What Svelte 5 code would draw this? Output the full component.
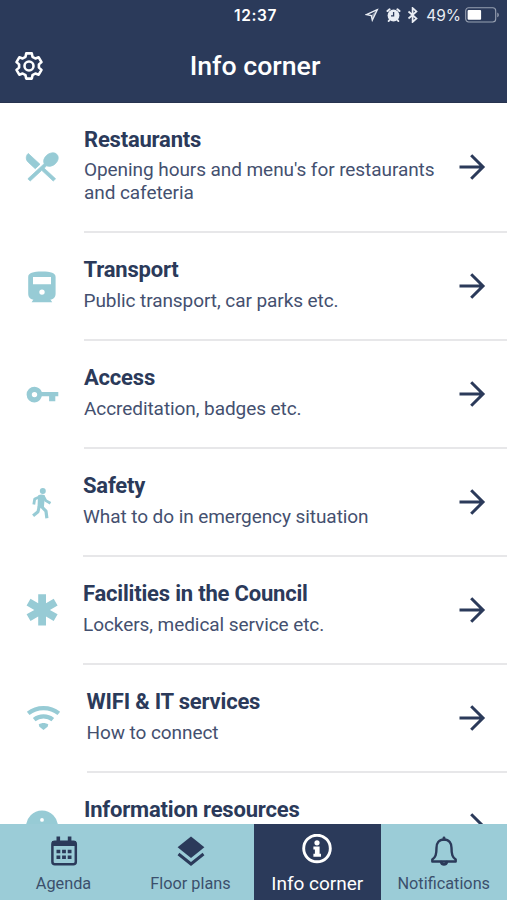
<script lang="ts">
    type Item = {
        icon: string;
        title: string;
        text?: string;
        shift: number;
    };

    const items: Item[] = [
        { icon: "food", title: "Restaurants", text: "Opening hours and menu's for restaurants and cafeteria", shift: 84 },
        { icon: "train", title: "Transport", text: "Public transport, car parks etc.", shift: 83.5 },
        { icon: "key", title: "Access", text: "Accreditation, badges etc.", shift: 84 },
        { icon: "walk", title: "Safety", text: "What to do in emergency situation", shift: 83 },
        { icon: "medical", title: "Facilities in the Council", text: "Lockers, medical service etc.", shift: 83 },
        { icon: "wifi", title: "WIFI & IT services", text: "How to connect", shift: 86.5 },
        { icon: "info", title: "Information resources", shift: 84 },
    ];

    const tabs = ["Agenda", "Floor plans", "Info corner", "Notifications"];

    let active = $state("Info corner");
</script>

<div class="screen">
    <header>
        <div class="status">
            <span></span>
            <span class="time">12:37</span>
            <div class="indicators">
                <svg class="location" width="14" height="14" viewBox="0 0 14 14">
                    <path d="M12.3 1.7 1.4 6.6l4.9.9 1 4.7z" fill="none" stroke="currentColor" stroke-width="1.3" />
                    <path d="M12.3 1.7 6.3 7.5l1 4.7z" fill="currentColor" fill-opacity=".5" />
                </svg>
                <svg class="alarm" width="15" height="14" viewBox="0 0 15 14">
                    <circle cx="7.5" cy="7.5" r="5.9" fill="currentColor" />
                    <path d="M1.5 3 3.6 1.3M13.5 3 11.4 1.3M3.500 12l-.8 1M11.500 12l.8 1" stroke="currentColor" stroke-width="2" stroke-linecap="round" />
                    <path d="M7.600 4v3.900H5" fill="none" stroke="#2b3a5a" stroke-width="1.3" />
                </svg>
                <svg class="bluetooth" width="11" height="16" viewBox="0 0 11 16">
                    <path d="m1.500 4.500 8 7L5.600 15V1l3.900 3.500-8 7" fill="none" stroke="currentColor" stroke-width="1.7" />
                </svg>
                <span class="percent">49%</span>
                <svg class="battery" width="35" height="16" viewBox="0 0 35 16">
                    <rect x=".7" y=".8" width="30" height="14.2" rx="3" fill="none" stroke="#98a1b2" stroke-width="1.1" />
                    <rect x="2.6" y="3" width="13.5" height="9.8" rx="1" fill="#fff" />
                    <path d="M32.3 5.500c2 .8 2 4 0 4.800z" fill="#98a1b2" />
                </svg>
            </div>
        </div>
        <div class="titlebar">
            <button type="button" aria-label="Settings">
                <svg width="30" height="30" viewBox="0 0 30 30" fill="none" stroke="currentColor" stroke-width="2.6" stroke-linejoin="round">
                    <path d="M12.2 2.4h5.600l.7 3.400 2.900 1.700 3.300-1.200 2.800 4.800-2.600 2.300v3.200l2.600 2.300-2.800 4.800-3.300-1.200-2.900 1.700-.7 3.400h-5.600l-.7-3.400-2.900-1.700-3.300 1.200-2.800-4.800 2.600-2.300v-3.200l-2.600-2.300 2.800-4.800 3.300 1.200 2.900-1.700z" />
                    <circle cx="15" cy="15" r="4.500" />
                </svg>
            </button>
            <h1>Info corner</h1>
            <span></span>
        </div>
    </header>

    <main>
        {#each items as item}
            <div class="row" style="grid-template-columns: {item.shift}px 1fr">
                <svg class="icon" width="40" height="40" viewBox="0 0 40 40" fill="currentColor">
                    {#if item.icon === "food"}
                        <path
                            transform="translate(-.3 1) scale(1.67 1.55)"
                            stroke="currentColor"
                            stroke-width=".5"
                            stroke-linejoin="round"
                            d="M8.1 13.34l2.83-2.83L3.91 3.5c-1.56 1.56-1.56 4.09 0 5.66l4.19 4.18zm6.78-1.81c1.53.71 3.68.21 5.27-1.38 1.91-1.91 2.28-4.65.81-6.12-1.46-1.46-4.2-1.1-6.12.81-1.59 1.59-2.09 3.74-1.38 5.27L3.7 19.87l1.41 1.41L12 14.41l6.88 6.88 1.41-1.41L13.41 13l1.47-1.47z"
                        />
                    {:else if item.icon === "train"}
                        <path
                            fill-rule="evenodd"
                            d="M6.2 11C6.2 7 11 5.500 20 5.500S33.600 7 33.600 11v16.500c0 3.600-2 6-5.200 6l1.800 2.700H9.600l1.800-2.700c-3.200 0-5.200-2.400-5.200-6zM11 11v7.200h18V11zM20 23.400a2.700 2.700 0 1 0 0 5.400 2.700 2.700 0 0 0 0-5.400z"
                        />
                    {:else if item.icon === "key"}
                        <path
                            fill-rule="evenodd"
                            d="M12.500 12.700c3.400 0 6.200 2.100 7.300 5.200H36.300v4.400h-3v5h-6.200v-5h-7.300c-1.100 3.800-3.900 6.200-7.300 6.200a7.900 7.900 0 0 1 0-15.800zm0 5.200a2.700 2.700 0 1 0 0 5.400 2.700 2.700 0 0 0 0-5.400z"
                        />
                    {:else if item.icon === "walk"}
                        <circle cx="20.800" cy="9" r="3" />
                        <g fill="none" stroke="currentColor" stroke-linejoin="round">
                            <path d="M18.500 14.500 12.700 17l-.9 5.500" stroke-width="2.800" />
                            <path d="M21.500 14.300 23.800 18.600l4.700 2.700" stroke-width="2.800" />
                            <path d="M17.200 24.500 16 29.700l-4.900 4.100" stroke-width="3.100" />
                            <path d="M19 24l5 5.200.9 7" stroke-width="3.200" />
                        </g>
                        <path d="M16 13.500c2-1.200 5-1.400 7 0l-1.200 12.300-6.300-.3z" />
                    {:else if item.icon === "medical"}
                        <path d="M16.200 4.300h7.800v8.900l7.700-4.500 3.900 6.800-7.700 4.400 7.700 4.400-3.900 6.800-7.700-4.500v8.900h-7.800v-8.900l-7.700 4.500-3.900-6.800 7.700-4.400-7.700-4.400 3.900-6.800 7.700 4.500z" />
                    {:else if item.icon === "wifi"}
                        <g fill="none" stroke="currentColor" stroke-width="4.2">
                            <path d="M6.200 15.400c8.700-7.100 21.900-7.100 30.600 0M12.200 21.600c5.300-4.300 13.300-4.300 18.600 0" />
                        </g>
                        <path d="M16.700 26.500c2.900-2 6.700-2 9.600 0l-.7 2.300-4.100 3.200-4.100-3.200z" />
                    {:else}
                        <path fill-rule="evenodd" d="M20 4.600a16 16 0 1 1 0 32 16 16 0 0 1 0-32zm0 7.400a1.900 1.900 0 1 0 0 3.800 1.900 1.900 0 0 0 0-3.800z" />
                    {/if}
                </svg>
                <div class="content">
                    <div class="copy">
                        <h2>{item.title}</h2>
                        <p>{item.text ?? ""}</p>
                    </div>
                    <svg class="arrow" width="28" height="28" viewBox="0 0 28 28" fill="none" stroke="currentColor" stroke-width="3">
                        <path d="M1.500 14H25M13.200 2.200 25 14 13.200 25.800" />
                    </svg>
                </div>
            </div>
        {/each}
    </main>

    <nav>
        {#each tabs as tab}
            <button type="button" class="tab" class:active={active === tab} onclick={() => (active = tab)}>
                <svg width="34" height="34" viewBox="0 0 34 34" fill="none" stroke="currentColor">
                    {#if tab === "Agenda"}
                        <rect x="5.400" y="7.700" width="23.400" height="22.600" rx="2.500" stroke-width="2.500" />
                        <path d="M5 7h24v5H5zM9.500 2.500h3.600V8H9.500zM20.800 2.500h3.600V8h-3.600z" fill="currentColor" stroke="none" />
                        <path d="M9.500 17.500h15M9.500 23.300h15" stroke-width="3.600" stroke-dasharray="3.800 1.800" />
                    {:else if tab === "Floor plans"}
                        <path d="m17 2.500 13.400 10.700L17 24 3.600 13.200z" fill="currentColor" stroke="none" />
                        <path d="M4.500 20 17 30l12.500-10" stroke-width="3" />
                    {:else if tab === "Info corner"}
                        <circle cx="17" cy="14.500" r="13.300" stroke-width="2.900" />
                        <circle cx="17" cy="8.800" r="2.600" fill="currentColor" stroke="none" />
                        <path d="M13.400 12.600h6.200v7.200H21v3h-7.600v-3h1.500v-4.200h-1.500z" fill="currentColor" stroke="none" />
                    {:else}
                        <path d="M17 5.500c-5.300 0-7.500 4-7.500 8.200 0 7-1 9.400-4.200 11.800v2h23.400v-2c-3.200-2.400-4.200-4.800-4.200-11.800 0-4.200-2.200-8.200-7.500-8.200z" stroke-width="2.400" stroke-linejoin="round" />
                        <path d="M17 5.500V3.800M14.200 28.200a2.900 2.900 0 0 0 5.600 0" stroke-width="2.800" stroke-linecap="round" />
                    {/if}
                </svg>
                <span>{tab}</span>
            </button>
        {/each}
    </nav>
</div>

<style>
    :global(body) {
        margin: 0;
        background: #fff;
    }

    .screen {
        display: flex;
        flex-direction: column;
        height: 900px;
        overflow: hidden;
        font-family: Roboto, "Liberation Sans", sans-serif;
        color: #2b3a5a;
        background: #fff;
    }

    header {
        flex: none;
        height: 103px;
        background: #2b3a5a;
        color: #fff;
        box-sizing: border-box;
        border-bottom: 1px solid #27334f;
    }

    button {
        border: none;
        padding: 0;
        background: transparent;
        color: inherit;
        font-family: inherit;
        cursor: pointer;
    }

    .status {
        display: grid;
        grid-template-columns: 1fr auto 1fr;
        align-items: center;
        height: 30px;
        padding: 0 7px 0 11px;
    }

    .time {
        font: 600 15.5px Inter, sans-serif;
        letter-spacing: 0.6px;
    }

    .indicators {
        display: flex;
        justify-content: flex-end;
        align-items: center;
        color: #e9edf4;
    }

    .alarm {
        margin-left: 7px;
    }

    .bluetooth {
        margin: 0 8px 0 6px;
    }

    .percent {
        font: 400 15.5px Inter, sans-serif;
        margin-right: 4px;
    }

    .titlebar {
        display: grid;
        grid-template-columns: 44px 1fr 41px;
        align-items: center;
        height: 72px;
        box-sizing: border-box;
    }

    .titlebar button {
        display: flex;
        padding-left: 14px;
    }

    h1 {
        margin: 0;
        font-size: 26.7px;
        font-weight: 500;
        text-align: center;
    }

    main {
        flex: 1;
        min-height: 0;
        overflow: hidden;
    }

    .row {
        display: grid;
        height: 108px;
    }

    .row:first-child {
        height: 130px;
    }

    .icon {
        align-self: center;
        margin-left: 22px;
        margin-bottom: 2px;
        color: #97cbd5;
    }

    .content {
        display: flex;
        align-items: center;
        border-bottom: 2px solid #e7e7e9;
        padding-right: 21px;
    }

    .copy {
        flex: 1;
        margin-top: -3px;
    }

    h2 {
        margin: 0 0 6.5px;
        font-size: 22px;
        line-height: 26px;
        font-weight: 700;
        letter-spacing: -0.2px;
    }

    p {
        margin: 0;
        width: 360px;
        min-height: 22.5px;
        font-size: 19px;
        line-height: 22.5px;
        letter-spacing: -0.07px;
        color: #44506f;
    }

    .arrow {
        flex: none;
    }

    nav {
        flex: none;
        display: grid;
        grid-template-columns: 127px 127px 126.5px 1fr;
        height: 76px;
        background: #9bccd7;
    }

    .tab {
        display: flex;
        flex-direction: column;
        align-items: center;
        padding-top: 10px;
        font-size: 16.3px;
        line-height: 20px;
    }

    .tab span {
        margin-top: 6px;
        opacity: 0.85;
        white-space: nowrap;
    }

    .tab.active {
        background: #2b3a5a;
        color: #fff;
        font-size: 19px;
    }

    .tab.active span {
        opacity: 1;
    }
</style>
